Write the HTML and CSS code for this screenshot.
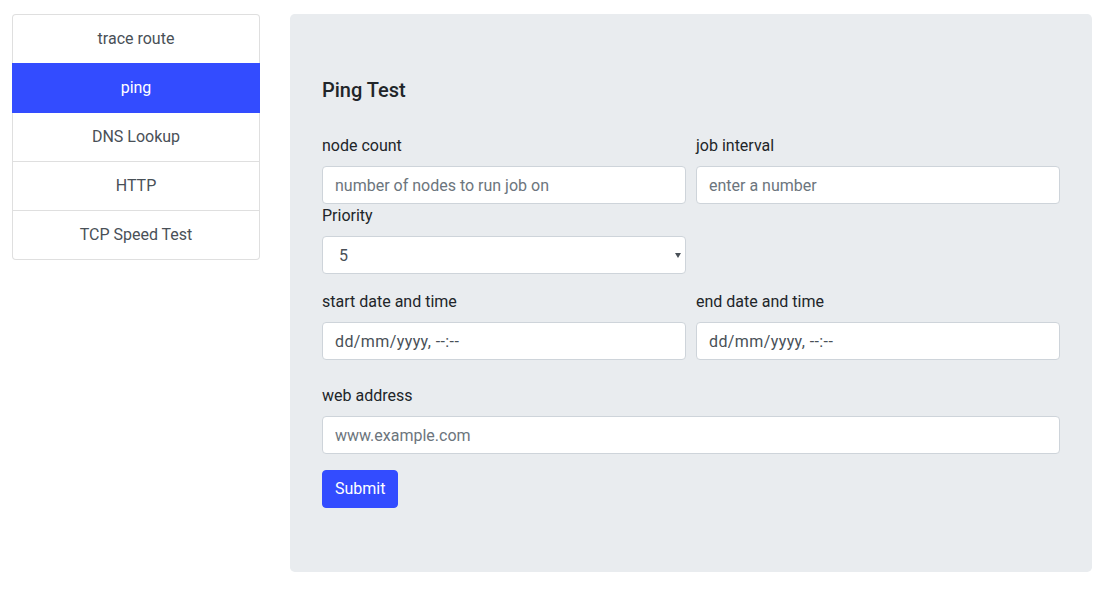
FILE: index.html
```html
<!DOCTYPE html>
<html lang="en">
<head>
<meta charset="utf-8">
<title>Ping Test</title>
<link rel="stylesheet" href="styles.css">
</head>
<body>
<div class="page">
  <nav class="list-group">
    <a class="list-item">trace route</a>
    <a class="list-item active">ping</a>
    <a class="list-item">DNS Lookup</a>
    <a class="list-item">HTTP</a>
    <a class="list-item">TCP Speed Test</a>
  </nav>
  <main class="panel">
    <h5 class="title">Ping Test</h5>
    <form class="form">
      <div class="form-row">
        <div class="col">
          <label class="label">node count</label>
          <input class="control" type="text" placeholder="number of nodes to run job on">
        </div>
        <div class="col">
          <label class="label">job interval</label>
          <input class="control" type="text" placeholder="enter a number">
        </div>
      </div>
      <div class="form-row group">
        <div class="col">
          <label class="label">Priority</label>
          <div class="select-wrap">
            <select class="control select">
              <option>1</option>
              <option>2</option>
              <option>3</option>
              <option>4</option>
              <option selected>5</option>
            </select>
          </div>
        </div>
        <div class="col"></div>
      </div>
      <div class="form-row group-lg">
        <div class="col">
          <label class="label">start date and time</label>
          <input class="control date" type="text" placeholder="dd/mm/yyyy, --:--">
        </div>
        <div class="col">
          <label class="label">end date and time</label>
          <input class="control date" type="text" placeholder="dd/mm/yyyy, --:--">
        </div>
      </div>
      <div class="group">
        <label class="label">web address</label>
        <input class="control" type="text" placeholder="www.example.com">
      </div>
      <button class="btn" type="button">Submit</button>
    </form>
  </main>
</div>
</body>
</html>
```

FILE: styles.css
```css
* { box-sizing: border-box; }
html, body { margin: 0; padding: 0; background: #fff; }
body {
  font-family: Roboto, "Liberation Sans", sans-serif;
  font-size: 16px;
  line-height: 1.5;
  color: #212529;
}
.page {
  display: flex;
  align-items: flex-start;
  gap: 30px;
  padding: 14px 18px 0 12px;
}
.list-group {
  width: 248px;
  flex: none;
  display: flex;
  flex-direction: column;
}
.list-item {
  position: relative;
  display: block;
  padding: 12px 20px;
  text-align: center;
  color: #495057;
  background: #fff;
  border: 1px solid rgba(0,0,0,.125);
  line-height: 24px;
  cursor: pointer;
}
.list-item + .list-item { margin-top: -1px; }
.list-item:first-child { border-radius: 4px 4px 0 0; }
.list-item:last-child { border-radius: 0 0 4px 4px; }
.list-item.active {
  z-index: 2;
  background: #334cff;
  border-color: #334cff;
  color: #fff;
}
.panel {
  flex: 1;
  background: #e9ecef;
  border-radius: 4.8px;
  padding: 64px 32px;
}
.title {
  margin: 0 0 32px;
  font-size: 20px;
  font-weight: 500;
  line-height: 24px;
}
.form { margin: 0; }
.form-row {
  display: flex;
  gap: 10px;
}
.col { flex: 1; min-width: 0; }
.group { margin-bottom: 16px; }
.group-lg { margin-bottom: 24px; }
.label {
  display: block;
  margin-bottom: 8px;
  line-height: 24px;
}
.control {
  display: block;
  width: 100%;
  height: 38px;
  padding: 6px 12px;
  font-family: inherit;
  font-size: 16px;
  line-height: 24px;
  color: #495057;
  background: #fff;
  border: 1px solid #ced4da;
  border-radius: 4px;
  outline: none;
}
.control::placeholder { color: #6c757d; opacity: 1; }
.control.date::placeholder { color: #495057; letter-spacing: 0.4px; }
.select-wrap { position: relative; }
.select {
  appearance: none;
  -webkit-appearance: none;
  padding-left: 16px;
  padding-top: 7px;
  padding-bottom: 5px;
}
.select-wrap::after {
  content: "";
  position: absolute;
  right: 5px;
  top: 17px;
  border-left: 3.5px solid transparent;
  border-right: 3.5px solid transparent;
  border-top: 5px solid #495057;
  pointer-events: none;
}
.btn {
  display: inline-block;
  height: 38px;
  padding: 6px 12px;
  font-family: inherit;
  font-size: 16px;
  line-height: 24px;
  color: #fff;
  background: #334cff;
  border: 1px solid #334cff;
  border-radius: 4px;
  cursor: pointer;
}
```
